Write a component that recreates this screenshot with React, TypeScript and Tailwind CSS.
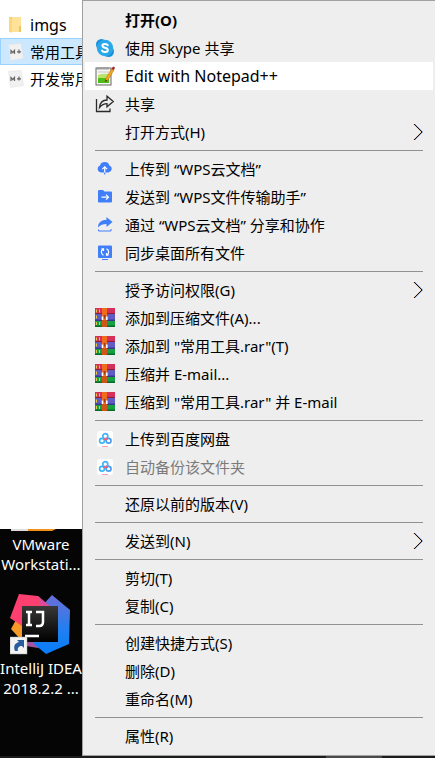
import React from "react";

type Entry = {
  label: string;
  icon?: React.ReactNode;
  arrow?: boolean;
  bold?: boolean;
  active?: boolean;
  disabled?: boolean;
};

const SkypeIcon = () => (
  <svg viewBox="0 0 20 20" className="size-5">
    <circle cx="6.5" cy="6.5" r="5.5" fill="#1c8fdc" />
    <circle cx="13.5" cy="13.5" r="5.5" fill="#1c8fdc" />
    <circle cx="10" cy="10" r="8.2" fill="#29a9ea" />
    <path
      d="M12.8 7.2C12 5.8 7.4 5.4 7.4 7.8C7.4 10.4 12.8 9.2 12.8 12C12.8 14.6 7.8 14.4 7 12.6"
      fill="none"
      stroke="#fff"
      strokeWidth="2"
      strokeLinecap="round"
    />
  </svg>
);

const NotepadIcon = () => (
  <svg viewBox="0 0 20 20" className="size-5">
    <rect x="1" y="2" width="15" height="17" fill="#f6f6f2" stroke="#666" />
    <path d="M3 6h11" stroke="#c4c4c4" />
    <path d="M3 1v3M5 1v3M7 1v3M9 1v3M11 1v3M13 1v3" stroke="#888" strokeWidth=".8" />
    <path d="M3 9q5-2 11-1v5H3Z" fill="#b9e36c" />
    <rect x="3" y="12" width="11" height="5" fill="#4fbd18" />
    <path d="M10 16l1-4 5.500-9 2.500 1-6 10Z" fill="#f2a51d" stroke="#b86a10" strokeWidth=".5" />
    <path d="M10 16l.6-2.500 1.800 1Z" fill="#5a3214" />
    <path d="M16.500 3 18 .5 20 1.500 19 4Z" fill="#a3202b" />
  </svg>
);

const ShareIcon = () => (
  <svg viewBox="0 0 20 20" className="size-5" fill="none" stroke="#2b2b2b" strokeWidth="1.3">
    <path d="M1.500 5v12.500H15V14.500" />
    <path d="M4.500 13.500C5 9 7.500 6 12 6V2.200L18.300 7.500 12 12.800V9.600C9 9.600 6.500 11 4.500 13.500Z" />
  </svg>
);

const CloudIcon = () => (
  <svg viewBox="0 0 20 20" className="size-5">
    <path d="M6 13.500A3.700 3.700 0 0 1 5 6.400a5 5 0 0 1 9.400 0A3.700 3.700 0 0 1 13.500 13.500Z" fill="#417ff9" />
    <path d="M9.700 14V8M7.300 10.200 9.700 7.800l2.400 2.400" fill="none" stroke="#fff" strokeWidth="1.2" />
    <path d="M9.700 13.500v2" stroke="#417ff9" strokeWidth="1.2" />
  </svg>
);

const FolderSendIcon = () => (
  <svg viewBox="0 0 20 20" className="size-5">
    <path d="M3 4Q3 3 4 3h4l1.500 1.500H16q1 0 1 1v9q0 1-1 1H4q-1 0-1-1Z" fill="#417ff9" />
    <path d="M6.500 10.200h7M11 7.700l2.500 2.500L11 12.700" fill="none" stroke="#fff" strokeWidth="1.2" />
  </svg>
);

const ForwardIcon = () => (
  <svg viewBox="0 0 20 20" className="size-5">
    <path d="M3 12.500C3 7.500 6.500 4.700 11.500 4.700V2L17.500 7 11.500 12V9C8 9 5 10 3 12.500Z" fill="#417ff9" />
    <path d="M3.500 14.500v1.500h12.500v-2" fill="none" stroke="#417ff9" />
  </svg>
);

const SyncIcon = () => (
  <svg viewBox="0 0 20 20" className="size-5">
    <rect x="3" y="2.500" width="14" height="12.500" rx="1" fill="#417ff9" />
    <path d="M7 16.500h6" stroke="#417ff9" />
    <path
      d="M8.500 12.200A3.500 3.500 0 0 1 8 6M11.500 5.800A3.500 3.500 0 0 1 12 12M6.500 5.800H8.500V8M13.500 12.200h-2V10"
      fill="none"
      stroke="#fff"
      strokeWidth="1.2"
    />
  </svg>
);

const RarIcon = () => (
  <svg viewBox="0 0 20 20" className="size-5">
    <rect x="0" y="0" width="20" height="6" fill="#d6305a" />
    <rect x="0" y="5" width="20" height="1" fill="#8d1c39" />
    <rect x="0" y="6" width="20" height="7" fill="#5f5cc4" />
    <rect x="0" y="11.500" width="20" height="1.500" fill="#3b3890" />
    <rect x="0" y="13" width="20" height="6" fill="#17a043" />
    <rect x="0" y="17.500" width="20" height="1.500" fill="#0a6a2b" />
    <path d="M1.500 1.500v3M1.500 7.500v3M1.500 14v3M4.500 1.500v3M4.500 14v3" stroke="#e9c545" />
    <rect x="7" y="0" width="5" height="19" fill="#ee6c1c" />
    <path d="M7 12h5v7H7Z" fill="#cf5518" />
    <path d="M7.500 12V8.500M11.800 12V8.500" stroke="#fff" strokeWidth="1.6" />
    <path d="M9.600 7v3.500" stroke="#a03a10" strokeWidth="1.6" />
  </svg>
);

const BaiduIcon = () => (
  <svg viewBox="0 0 20 20" className="size-5" fill="none" strokeWidth="1.7">
    <rect x="2" y="2" width="16" height="16" rx="3" fill="#fff" />
    <circle cx="10.300" cy="7.200" r="2.500" stroke="#48b4f5" />
    <circle cx="7" cy="11.800" r="2.400" stroke="#38b8f8" />
    <circle cx="13.600" cy="11.800" r="2.400" stroke="#4b9df2" />
    <path d="M8.500 9.800 10.500 10.800 12.500 9" stroke="#f2607e" />
    <path d="M7 17.500h6" stroke="#f7a0b0" strokeWidth="1" />
  </svg>
);

const groups: Entry[][] = [
  [
    { label: "打开(O)", bold: true },
    { label: "使用 Skype 共享", icon: <SkypeIcon /> },
    { label: "Edit with Notepad++", icon: <NotepadIcon />, active: true },
    { label: "共享", icon: <ShareIcon /> },
    { label: "打开方式(H)", arrow: true },
  ],
  [
    { label: "上传到 “WPS云文档”", icon: <CloudIcon /> },
    { label: "发送到 “WPS文件传输助手”", icon: <FolderSendIcon /> },
    { label: "通过 “WPS云文档” 分享和协作", icon: <ForwardIcon /> },
    { label: "同步桌面所有文件", icon: <SyncIcon /> },
  ],
  [
    { label: "授予访问权限(G)", arrow: true },
    { label: "添加到压缩文件(A)...", icon: <RarIcon /> },
    { label: '添加到 "常用工具.rar"(T)', icon: <RarIcon /> },
    { label: "压缩并 E-mail...", icon: <RarIcon /> },
    { label: '压缩到 "常用工具.rar" 并 E-mail', icon: <RarIcon /> },
  ],
  [
    { label: "上传到百度网盘", icon: <BaiduIcon /> },
    { label: "自动备份该文件夹", icon: <BaiduIcon />, disabled: true },
  ],
  [{ label: "还原以前的版本(V)" }],
  [{ label: "发送到(N)", arrow: true }],
  [{ label: "剪切(T)" }, { label: "复制(C)" }],
  [{ label: "创建快捷方式(S)" }, { label: "删除(D)" }, { label: "重命名(M)" }],
  [{ label: "属性(R)" }],
];

const SubmenuArrow = () => (
  <svg viewBox="0 0 12 18" className="h-[18px] w-3 shrink-0" fill="none">
    <path d="M1.500 1l8 8-8 8" stroke="#f0c070" strokeWidth="1" />
    <path d="M2.500 1l8 8-8 8" stroke="#3a86d8" strokeWidth="1" />
    <path d="M2 1l8 8-8 8" stroke="#200c18" strokeWidth="1" />
  </svg>
);

function MenuItem({ label, icon, arrow, bold, active, disabled }: Entry) {
  return (
    <button
      type="button"
      role="menuitem"
      disabled={disabled}
      className={`flex h-7 w-full items-center pr-[9px] pl-2.5 text-left whitespace-nowrap ${
        active ? "bg-white text-base" : ""
      } ${bold ? "font-bold" : ""} ${disabled ? "text-[#7b7b7b]" : "text-black"}`}
    >
      <span className="mr-2.5 flex size-5 shrink-0">{icon}</span>
      <span className="flex-1">{label}</span>
      {arrow && <SubmenuArrow />}
    </button>
  );
}

const MarkdownIcon = () => (
  <svg viewBox="0 0 16 18" className="h-[18px] w-4 shrink-0">
    <path d="M.5 1.500 13 .5 15.500 15.500 2.500 17.500Z" fill="#f1f1f1" stroke="#e0e0e0" strokeWidth=".5" />
    <path d="M3 11V7.500l1.800 2 1.700-2V11M11 6.500v4M9 8.800h4" fill="none" stroke="#666" strokeWidth="1.2" />
  </svg>
);

const FolderIcon = () => (
  <svg viewBox="0 0 16 18" className="h-[18px] w-4 shrink-0">
    <path d="M1 1h4v15H1Z" fill="#f3cf66" />
    <path d="M4 1h9v15H4Z" fill="#ffe29a" />
    <path d="M1 1l3 2v14l-3-1.500Z" fill="#fbd775" />
    <path d="M11 10h2v6h-2Z" fill="#eec65c" />
  </svg>
);

function FileRow({
  name,
  icon,
  selected,
  large,
}: {
  name: string;
  icon: React.ReactNode;
  selected?: boolean;
  large?: boolean;
}) {
  return (
    <li
      className={`flex h-[27px] items-center gap-1.5 border pl-[7px] whitespace-nowrap ${
        selected ? "border-[#99d1ff] bg-[#cce8ff]" : "border-transparent"
      } ${large ? "text-base" : ""}`}
    >
      {icon}
      <span>{name}</span>
    </li>
  );
}

const IntelliJIcon = () => (
  <svg viewBox="0 0 62 62" className="h-[62px] w-[62px]">
    <defs>
      <linearGradient id="blue" x1="0" y1="0" x2="0" y2="1">
        <stop offset="0" stopColor="#6b6ed8" />
        <stop offset=".6" stopColor="#1f80f0" />
        <stop offset="1" stopColor="#087cfa" />
      </linearGradient>
      <linearGradient id="dark" x1="0" y1="0" x2="0" y2="1">
        <stop offset="0" stopColor="#383838" />
        <stop offset="1" stopColor="#000" />
      </linearGradient>
    </defs>
    <path d="M7 24 1 35l11 12 14 2V26Z" fill="#f59a28" />
    <path d="M16 46l22-4-10 12-12-2Z" fill="#a552a0" />
    <path d="M30 14 42 1 60 16 59 50 36 60 24 50Z" fill="url(#blue)" />
    <path d="M9 0 28 2 40 15 38 40 12 32 0 24Z" fill="#fe4070" />
    <path d="M28 2l12 10-6 14Z" fill="#d94b98" />
    <rect x="12" y="12" width="36" height="36" fill="url(#dark)" />
    <path d="M16 18h6M19 18v13M16 31h6M26 18h7v10q0 4-4 4h-3M15 42h14" fill="none" stroke="#fff" strokeWidth="2.5" />
    <rect x="0" y="43" width="17" height="17" fill="#f2f2f2" stroke="#aaa" strokeWidth=".5" />
    <path d="M5 57c-2-5 0-8 4-9l-2-2h7v8l-2-2c-3 0-5 2-4 5Z" fill="#285c9e" />
  </svg>
);

export default function App() {
  return (
    <div className="relative flex min-h-screen flex-col overflow-hidden bg-[#050505] font-['Noto_Sans','Noto_Sans_CJK_SC',sans-serif] text-[15px] leading-5">
      <ul className="h-[529px] bg-white pt-[11px] text-black">
        <FileRow name="imgs" icon={<FolderIcon />} large />
        <FileRow name="常用工具" icon={<MarkdownIcon />} selected />
        <FileRow name="开发常用" icon={<MarkdownIcon />} />
      </ul>
      <div className="flex w-[82px] flex-col items-center text-center whitespace-nowrap text-white">
        <svg viewBox="0 0 60 5" className="h-[5px] w-[60px]">
          <path d="M0 0h17v2H0Z" fill="#ddd" />
          <path d="M17 0h28l-4 2H17Z" fill="#f39019" />
        </svg>
        <p>
          VMware
          <br />
          Workstati...
        </p>
        <div className="mt-5 mb-0.5">
          <IntelliJIcon />
        </div>
        <p>
          IntelliJ IDEA
          <br />
          2018.2.2 ...
        </p>
      </div>
      <div className="mt-auto flex h-0.5 bg-[#1c1c1e]">
        <span className="ml-[75%] w-14 bg-[#4a4a4a]" />
      </div>

      <div
        role="menu"
        className="absolute top-0 right-0 left-[82px] border-y border-l border-[#a0a0a0] bg-[#eeeeee] px-0.5 py-[5px]"
      >
        {groups.map((group, g) => (
          <React.Fragment key={g}>
            {g > 0 && <hr className="mx-2.5 my-1 border-t border-[#919191]" />}
            {group.map((entry) => (
              <MenuItem key={entry.label} {...entry} />
            ))}
          </React.Fragment>
        ))}
      </div>
    </div>
  );
}
